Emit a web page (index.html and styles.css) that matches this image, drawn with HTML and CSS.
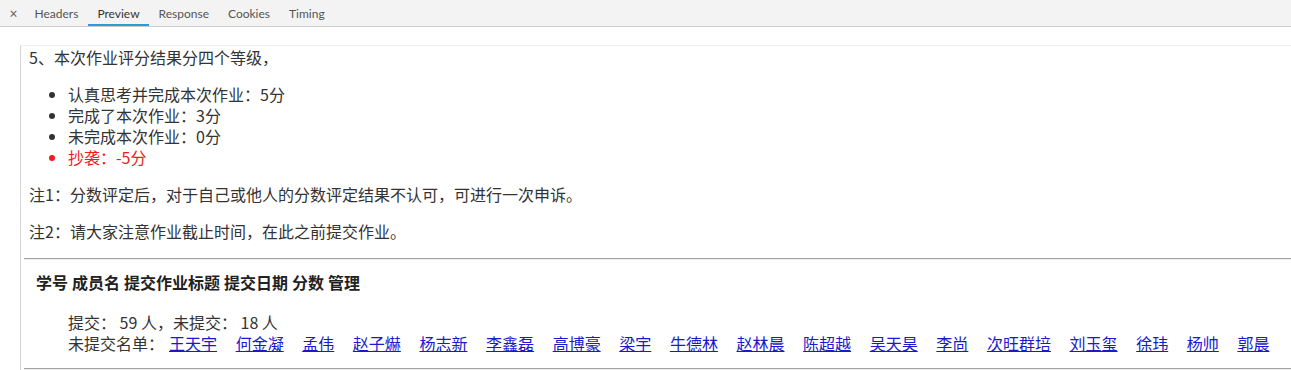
FILE: index.html
```html
<!DOCTYPE html>
<html lang="zh">
<head>
<meta charset="utf-8">
<link rel="stylesheet" href="styles.css">
</head>
<body>
<div class="tabbar">
  <span class="close">×</span>
  <span class="tab">Headers</span>
  <span class="tab active">Preview</span>
  <span class="tab">Response</span>
  <span class="tab">Cookies</span>
  <span class="tab">Timing</span>
</div>
<div class="preview">
  <div class="doc">
    <p class="first">5、本次作业评分结果分四个等级，</p>
    <ul class="grades">
      <li>认真思考并完成本次作业：5分</li>
      <li>完成了本次作业：3分</li>
      <li>未完成本次作业：0分</li>
      <li class="red">抄袭：-5分</li>
    </ul>
    <p>注1：分数评定后，对于自己或他人的分数评定结果不认可，可进行一次申诉。</p>
    <p>注2：请大家注意作业截止时间，在此之前提交作业。</p>
    <hr class="rule">
    <div class="thead">
      <span>学号</span><span>成员名</span><span>提交作业标题</span><span>提交日期</span><span>分数</span><span>管理</span>
    </div>
    <div class="summary">
      <div>提交： 59 人，未提交： 18 人</div>
      <div class="names">未提交名单：<a href="#">王天宇</a><a href="#">何金凝</a><a href="#">孟伟</a><a href="#">赵子爀</a><a href="#">杨志新</a><a href="#">李鑫磊</a><a href="#">高博豪</a><a href="#">梁宇</a><a href="#">牛德林</a><a href="#">赵林晨</a><a href="#">陈超越</a><a href="#">吴天昊</a><a href="#">李尚</a><a href="#">次旺群培</a><a href="#">刘玉玺</a><a href="#">徐玮</a><a href="#">杨帅</a><a href="#">郭晨</a></div>
    </div>
    <hr class="rule bottom">
  </div>
</div>
</body>
</html>
```

FILE: styles.css
```css
html, body {
  margin: 0;
  padding: 0;
  background: #fff;
}
body {
  font-family: "Noto Sans", "Noto Sans CJK SC", sans-serif;
  overflow: hidden;
}
.tabbar {
  height: 26px;
  background: #f3f3f3;
  border-bottom: 1px solid #cccccc;
  display: flex;
  align-items: stretch;
  font-family: Lato, "Noto Sans", sans-serif;
  font-size: 12px;
  color: #555;
  box-sizing: content-box;
}
.close {
  width: 23px;
  display: flex;
  align-items: center;
  justify-content: center;
  font-family: "Noto Sans", sans-serif;
  font-size: 14px;
  color: #666;
  padding-left: 2px;
}
.tab {
  display: flex;
  align-items: center;
  padding: 2px 9.5px 0;
  border-bottom: 2px solid transparent;
  box-sizing: border-box;
}
.tab.active {
  color: #333;
  border-bottom-color: #2f9ad2;
}
.preview {
  padding: 18px 0 0 20px;
}
.doc {
  border-top: 1px solid #efefef;
  border-left: 1px solid #d6d6d6;
  padding: 1px 0 0 8px;
  font-family: "Noto Sans CJK SC", "Noto Sans", sans-serif;
  font-size: 16px;
  line-height: 21px;
  color: #333;
}
.doc p {
  margin: 16px 0;
}
.doc p.first {
  margin-top: 0;
}
.grades {
  margin: 16px 0;
  padding-left: 39px;
}
.red {
  color: #ee1c1c;
}
.rule {
  margin: 16px 0 0 -5px;
  height: 0;
  border: 0;
  border-top: 1px solid #a3a3a3;
  border-bottom: 1px solid #ededed;
}
.rule.bottom {
  margin-top: 14px;
}
.thead {
  display: flex;
  gap: 4px;
  padding-left: 7px;
  margin-top: 12px;
  font-weight: bold;
  color: #222;
}
.summary {
  padding-left: 39px;
  margin-top: 19px;
}
.names {
  white-space: nowrap;
}
.names a {
  color: #1a1acc;
  text-decoration: underline;
  margin-right: 18.6px;
}
.names a:first-child {
  margin-left: 5px;
}
```
